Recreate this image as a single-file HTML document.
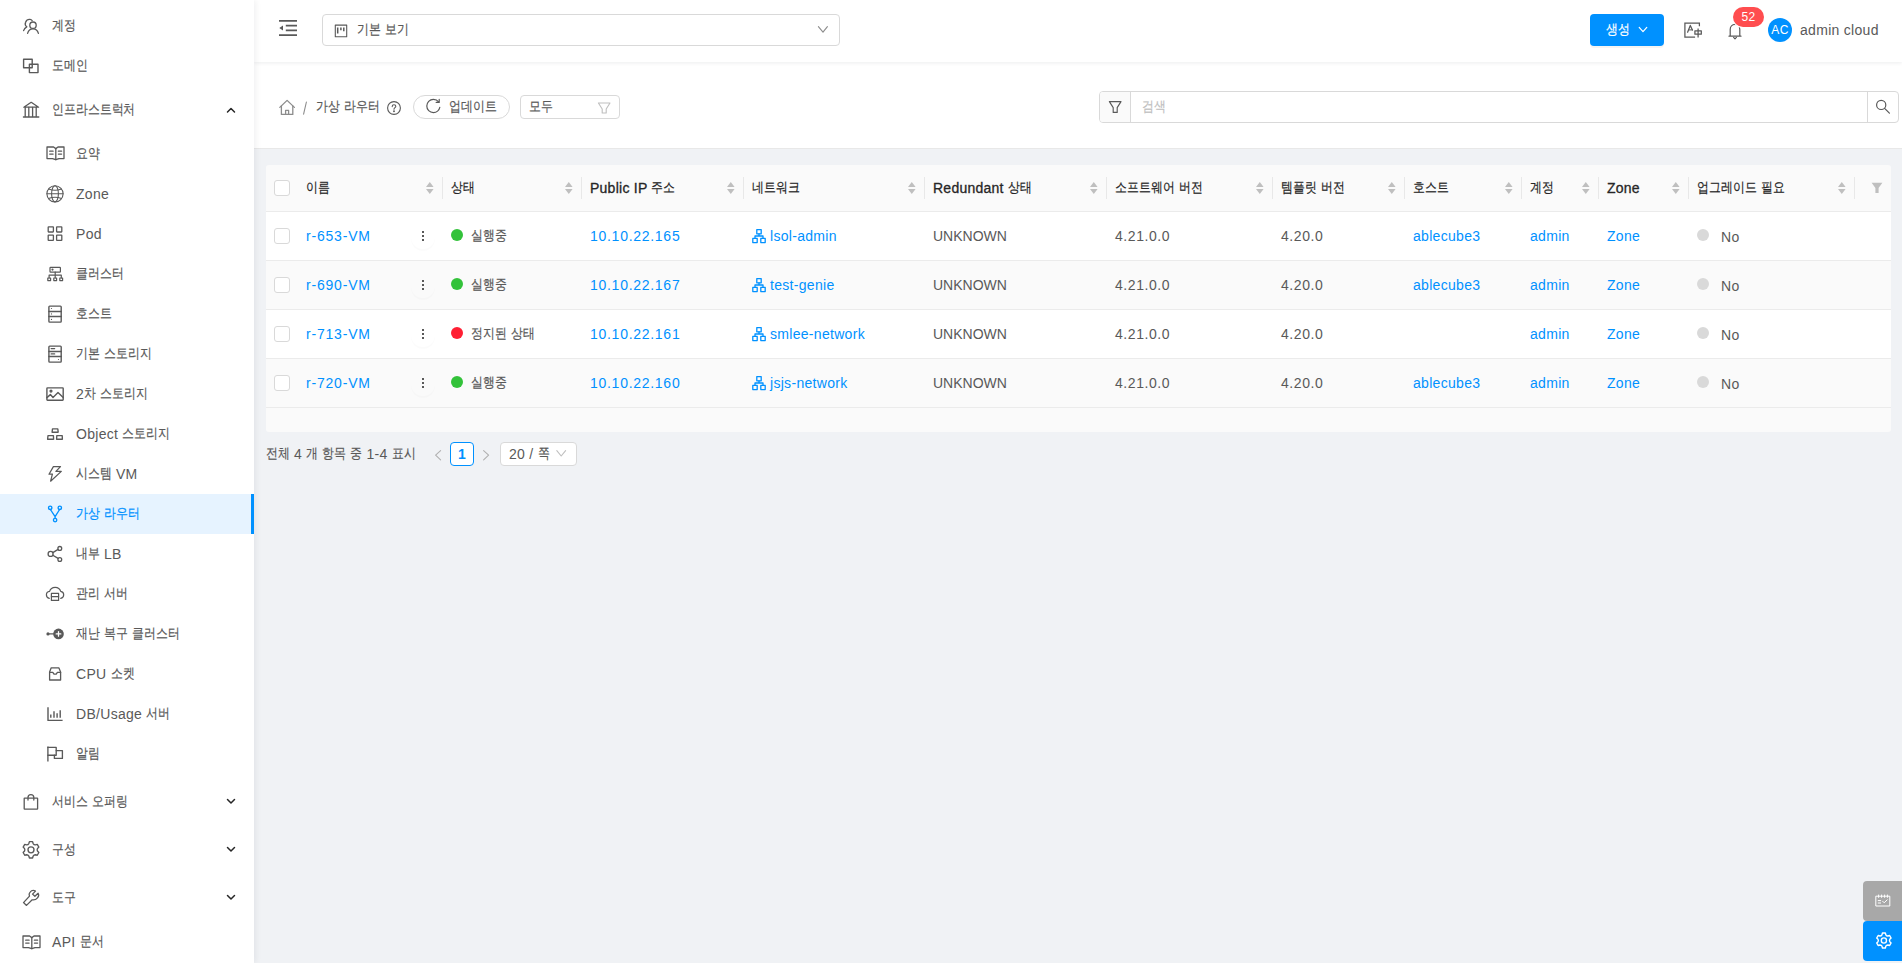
<!DOCTYPE html>
<html><head><meta charset="utf-8"><title>가상 라우터</title>
<style>
html,body{margin:0;padding:0;}
body{width:1902px;height:963px;overflow:hidden;position:relative;background:#f0f2f5;font-family:"Liberation Sans",sans-serif;font-size:14px;color:#595959;}
.t{position:absolute;white-space:nowrap;}
k{letter-spacing:0;display:inline-block;-webkit-text-stroke:0.2px currentColor;transform:translateY(-1px) scaleX(.85);transform-origin:0 50%;}
svg{overflow:visible;}
</style></head><body>
<div style="position:absolute;left:254px;top:62px;width:1648px;height:87px;box-sizing:border-box;background:#fff;border-bottom:1px solid #e8e8e8"></div>
<div style="position:absolute;left:266px;top:165px;width:1625px;height:267px;box-sizing:border-box;background:#fafafa;border-radius:3px"></div>
<div style="position:absolute;left:266px;top:212px;width:1625px;height:49px;box-sizing:border-box;background:#fff;border-bottom:1px solid #ebebeb"></div>
<div style="position:absolute;left:266px;top:261px;width:1625px;height:49px;box-sizing:border-box;background:#fafafa;border-bottom:1px solid #ebebeb"></div>
<div style="position:absolute;left:266px;top:310px;width:1625px;height:49px;box-sizing:border-box;background:#fff;border-bottom:1px solid #ebebeb"></div>
<div style="position:absolute;left:266px;top:359px;width:1625px;height:49px;box-sizing:border-box;background:#fafafa;border-bottom:1px solid #ebebeb"></div>
<div style="position:absolute;left:266px;top:211px;width:1625px;height:1px;box-sizing:border-box;background:#ebebeb"></div>
<div style="position:absolute;left:254px;top:0px;width:1648px;height:62px;box-sizing:border-box;background:#fff;box-shadow:0 1px 4px rgba(0,21,41,.08)"></div>
<div style="position:absolute;left:0px;top:0px;width:254px;height:963px;box-sizing:border-box;background:#fff;box-shadow:2px 0 6px rgba(0,21,41,.06)"></div>
<div style="position:absolute;left:0px;top:494px;width:254px;height:40px;box-sizing:border-box;background:#e6f3ff"></div>
<div style="position:absolute;left:251px;top:494px;width:3px;height:40px;box-sizing:border-box;background:#0091ff"></div>
<div class="t" style="left:52px;top:16.0px;font-size:14px;line-height:20px;color:#595959;font-weight:normal;letter-spacing:0.3px;"><k style="margin-right:-4.20px">계정</k></div>
<div class="t" style="left:52px;top:56.0px;font-size:14px;line-height:20px;color:#595959;font-weight:normal;letter-spacing:0.3px;"><k style="margin-right:-6.30px">도메인</k></div>
<div class="t" style="left:52px;top:100.0px;font-size:14px;line-height:20px;color:#595959;font-weight:normal;letter-spacing:0.3px;"><k style="margin-right:-14.70px">인프라스트럭처</k></div>
<div class="t" style="left:76px;top:144.0px;font-size:14px;line-height:20px;color:#595959;font-weight:normal;letter-spacing:0.3px;"><k style="margin-right:-4.20px">요약</k></div>
<div class="t" style="left:76px;top:184.0px;font-size:14px;line-height:20px;color:#595959;font-weight:normal;letter-spacing:0.3px;">Zone</div>
<div class="t" style="left:76px;top:224.0px;font-size:14px;line-height:20px;color:#595959;font-weight:normal;letter-spacing:0.3px;">Pod</div>
<div class="t" style="left:76px;top:264.0px;font-size:14px;line-height:20px;color:#595959;font-weight:normal;letter-spacing:0.3px;"><k style="margin-right:-8.40px">클러스터</k></div>
<div class="t" style="left:76px;top:304.0px;font-size:14px;line-height:20px;color:#595959;font-weight:normal;letter-spacing:0.3px;"><k style="margin-right:-6.30px">호스트</k></div>
<div class="t" style="left:76px;top:344.0px;font-size:14px;line-height:20px;color:#595959;font-weight:normal;letter-spacing:0.3px;"><k style="margin-right:-4.20px">기본</k> <k style="margin-right:-8.40px">스토리지</k></div>
<div class="t" style="left:76px;top:384.0px;font-size:14px;line-height:20px;color:#595959;font-weight:normal;letter-spacing:0.3px;">2<k style="margin-right:-2.10px">차</k> <k style="margin-right:-8.40px">스토리지</k></div>
<div class="t" style="left:76px;top:424.0px;font-size:14px;line-height:20px;color:#595959;font-weight:normal;letter-spacing:0.3px;">Object <k style="margin-right:-8.40px">스토리지</k></div>
<div class="t" style="left:76px;top:464.0px;font-size:14px;line-height:20px;color:#595959;font-weight:normal;letter-spacing:0.3px;"><k style="margin-right:-6.30px">시스템</k> VM</div>
<div class="t" style="left:76px;top:504.0px;font-size:14px;line-height:20px;color:#0091ff;font-weight:normal;letter-spacing:0.3px;"><k style="margin-right:-4.20px">가상</k> <k style="margin-right:-6.30px">라우터</k></div>
<div class="t" style="left:76px;top:544.0px;font-size:14px;line-height:20px;color:#595959;font-weight:normal;letter-spacing:0.3px;"><k style="margin-right:-4.20px">내부</k> LB</div>
<div class="t" style="left:76px;top:584.0px;font-size:14px;line-height:20px;color:#595959;font-weight:normal;letter-spacing:0.3px;"><k style="margin-right:-4.20px">관리</k> <k style="margin-right:-4.20px">서버</k></div>
<div class="t" style="left:76px;top:624.0px;font-size:14px;line-height:20px;color:#595959;font-weight:normal;letter-spacing:0.3px;"><k style="margin-right:-4.20px">재난</k> <k style="margin-right:-4.20px">복구</k> <k style="margin-right:-8.40px">클러스터</k></div>
<div class="t" style="left:76px;top:664.0px;font-size:14px;line-height:20px;color:#595959;font-weight:normal;letter-spacing:0.3px;">CPU <k style="margin-right:-4.20px">소켓</k></div>
<div class="t" style="left:76px;top:704.0px;font-size:14px;line-height:20px;color:#595959;font-weight:normal;letter-spacing:0.3px;">DB/Usage <k style="margin-right:-4.20px">서버</k></div>
<div class="t" style="left:76px;top:744.0px;font-size:14px;line-height:20px;color:#595959;font-weight:normal;letter-spacing:0.3px;"><k style="margin-right:-4.20px">알림</k></div>
<div class="t" style="left:52px;top:792.0px;font-size:14px;line-height:20px;color:#595959;font-weight:normal;letter-spacing:0.3px;"><k style="margin-right:-6.30px">서비스</k> <k style="margin-right:-6.30px">오퍼링</k></div>
<svg style="position:absolute;left:225px;top:796px;" width="12" height="10" viewBox="225 796 12 10" fill="none" stroke="#262626" stroke-width="1.5" stroke-linecap="round" stroke-linejoin="round"><path d="M227.5 799.5 L231 803 L234.5 799.5"/></svg>
<div class="t" style="left:52px;top:840.0px;font-size:14px;line-height:20px;color:#595959;font-weight:normal;letter-spacing:0.3px;"><k style="margin-right:-4.20px">구성</k></div>
<svg style="position:absolute;left:225px;top:844px;" width="12" height="10" viewBox="225 844 12 10" fill="none" stroke="#262626" stroke-width="1.5" stroke-linecap="round" stroke-linejoin="round"><path d="M227.5 847.5 L231 851 L234.5 847.5"/></svg>
<div class="t" style="left:52px;top:887.5px;font-size:14px;line-height:20px;color:#595959;font-weight:normal;letter-spacing:0.3px;"><k style="margin-right:-4.20px">도구</k></div>
<svg style="position:absolute;left:225px;top:891.5px;" width="12" height="10" viewBox="225 891.5 12 10" fill="none" stroke="#262626" stroke-width="1.5" stroke-linecap="round" stroke-linejoin="round"><path d="M227.5 895.0 L231 898.5 L234.5 895.0"/></svg>
<div class="t" style="left:52px;top:932.0px;font-size:14px;line-height:20px;color:#595959;font-weight:normal;letter-spacing:0.3px;">API <k style="margin-right:-4.20px">문서</k></div>
<svg style="position:absolute;left:225px;top:104px;" width="12" height="10" viewBox="225 104 12 10" fill="none" stroke="#262626" stroke-width="1.5" stroke-linecap="round" stroke-linejoin="round"><path d="M227.5 112 L231 108.5 L234.5 112"/></svg>
<svg style="position:absolute;left:20px;top:15px;" width="22" height="22" viewBox="20 15 22 22" fill="none" stroke="#595959" stroke-width="1.3" stroke-linecap="round" stroke-linejoin="round">
<circle cx="33" cy="25.2" r="3.2"/>
<path d="M27.6 33.4 C28.4 30.4 30.4 28.8 33 28.8 C35.6 28.8 37.6 30.4 38.4 33.4"/>
<path d="M23.6 30.6 C24.2 28.6 25.2 27.6 26.8 26.8 C25.2 25.6 25 23.6 25.6 22.2 C26.4 20.2 28 19.2 30 19.4 C31 19.5 31.7 20 32.2 20.6"/>
</svg>
<svg style="position:absolute;left:20px;top:55px;" width="22" height="22" viewBox="20 55 22 22" fill="none" stroke="#595959" stroke-width="1.4" stroke-linecap="round" stroke-linejoin="round">
<rect x="23.6" y="59.2" width="8.6" height="8.6"/>
<rect x="29.4" y="64.2" width="8.6" height="8.4"/>
</svg>
<svg style="position:absolute;left:20px;top:99px;" width="22" height="22" viewBox="20 99 22 22" fill="none" stroke="#595959" stroke-width="1.3" stroke-linecap="round" stroke-linejoin="round">
<path d="M23.8 107.2 L31.2 102.3 L38.6 107.2 Z"/>
<path d="M25.2 107.4 V116.6 M28.8 107.4 V116.6 M32.6 107.4 V116.6 M36.2 107.4 V116.6"/>
<path d="M23.4 117 H38.8"/>
</svg>
<svg style="position:absolute;left:43.6px;top:144.4px;" width="23" height="19" viewBox="43.6 144.4 23 19" fill="none" stroke="#595959" stroke-width="1.3" stroke-linecap="round" stroke-linejoin="round"><path d="M46.60 147.40 L46.60 159.00 L52.10 159.00 L55.40 160.10 L58.60 159.00 L63.60 159.00 L63.60 147.40 L57.60 147.40 L55.40 149.00 L53.20 147.40 Z"/>
<path d="M55.40 149.00 L55.40 160.10"/>
<path d="M49.30 151.60 L52.70 151.60 M49.30 154.50 L52.70 154.50 M58.00 151.60 L61.20 151.60 M58.00 154.50 L61.20 154.50"/></svg>
<svg style="position:absolute;left:19.6px;top:933.0px;" width="23" height="19" viewBox="19.6 933.0 23 19" fill="none" stroke="#595959" stroke-width="1.3" stroke-linecap="round" stroke-linejoin="round"><path d="M22.60 936.00 L22.60 947.60 L28.10 947.60 L31.40 948.70 L34.60 947.60 L39.60 947.60 L39.60 936.00 L33.60 936.00 L31.40 937.60 L29.20 936.00 Z"/>
<path d="M31.40 937.60 L31.40 948.70"/>
<path d="M25.30 940.20 L28.70 940.20 M25.30 943.10 L28.70 943.10 M34.00 940.20 L37.20 940.20 M34.00 943.10 L37.20 943.10"/></svg>
<svg style="position:absolute;left:44px;top:182px;" width="22" height="24" viewBox="44 182 22 24" fill="none" stroke="#595959" stroke-width="1.1" stroke-linecap="round" stroke-linejoin="round">
<circle cx="55" cy="193.8" r="8.1"/>
<ellipse cx="55" cy="193.8" rx="3.4" ry="8.1"/>
<path d="M46.9 193.8 H63.1"/>
<path d="M48.6 189 C52.5 190.6 57.5 190.6 61.4 189"/>
<path d="M48.6 198.6 C52.5 197 57.5 197 61.4 198.6"/>
</svg>
<svg style="position:absolute;left:44px;top:223px;" width="22" height="22" viewBox="44 223 22 22" fill="none" stroke="#595959" stroke-width="1.3" stroke-linecap="round" stroke-linejoin="round">
<rect x="48.2" y="226.8" width="5.2" height="5.2" rx="0.4"/>
<rect x="56.6" y="226.8" width="5.2" height="5.2" rx="0.4"/>
<rect x="48.2" y="235.2" width="5.2" height="5.2" rx="0.4"/>
<rect x="56.6" y="235.2" width="5.2" height="5.2" rx="0.4"/>
</svg>
<svg style="position:absolute;left:44px;top:263px;" width="22" height="22" viewBox="44 263 22 22" fill="none" stroke="#595959" stroke-width="1.2" stroke-linecap="round" stroke-linejoin="round">
<rect x="50" y="267.4" width="10.4" height="4.8" rx="0.6"/>
<circle cx="52.5" cy="269.6" r="0.5" fill="#595959"/>
<path d="M55.2 272.2 V275.2 M49.1 278 V275.2 H61.3 V278 M55.2 275.2 V278"/>
<rect x="47.8" y="278" width="2.8" height="2.6"/>
<rect x="53.8" y="278" width="2.8" height="2.6"/>
<rect x="59.8" y="278" width="2.8" height="2.6"/>
</svg>
<svg style="position:absolute;left:44px;top:302px;" width="22" height="24" viewBox="44 302 22 24" fill="none" stroke="#595959" stroke-width="1.4" stroke-linecap="round" stroke-linejoin="round">
<rect x="48.9" y="306.1" width="12.3" height="16" rx="0.8"/>
<path d="M48.9 311.5 H61.2 M48.9 316.5 H61.2"/>
<circle cx="51.5" cy="308.5" r="0.6" fill="#595959" stroke="none"/>
<circle cx="51.5" cy="313.9" r="0.6" fill="#595959" stroke="none"/>
<circle cx="51.5" cy="319.4" r="0.6" fill="#595959" stroke="none"/>
</svg>
<svg style="position:absolute;left:44px;top:342px;" width="22" height="24" viewBox="44 342 22 24" fill="none" stroke="#595959" stroke-width="1.4" stroke-linecap="round" stroke-linejoin="round">
<rect x="48.9" y="346.1" width="12.3" height="16" rx="0.8"/>
<path d="M48.9 351.5 H61.2 M48.9 356.5 H61.2"/>
<path d="M51.2 348.6 H54.6 M51.2 353.9 H54.6"/>
<circle cx="58.5" cy="359.5" r="0.6" fill="#595959" stroke="none"/>
</svg>
<svg style="position:absolute;left:44px;top:384px;" width="22" height="20" viewBox="44 384 22 20" fill="none" stroke="#595959" stroke-width="1.4" stroke-linecap="round" stroke-linejoin="round">
<rect x="46.9" y="387.9" width="16.3" height="12.3" rx="0.6"/>
<path d="M46.9 397.6 L50.4 394.6 L53 397.4 L58 392.6 L63.2 397.4"/>
<circle cx="51" cy="391.1" r="0.9"/>
</svg>
<svg style="position:absolute;left:44px;top:424px;" width="22" height="20" viewBox="44 424 22 20" fill="none" stroke="#595959" stroke-width="1.35" stroke-linecap="round" stroke-linejoin="round">
<path d="M52.5 428.8 H57.8 L58.2 432.2 H52.1 Z"/>
<path d="M48 435.6 H53.4 L53.6 439.2 H47.6 Z"/>
<path d="M56.8 435.6 H62.2 L62.4 439.2 H56.6 Z"/>
</svg>
<svg style="position:absolute;left:44px;top:463px;" width="22" height="22" viewBox="44 463 22 22" fill="none" stroke="#595959" stroke-width="1.25" stroke-linecap="round" stroke-linejoin="round">
<path d="M53.4 466.6 H60.5 L55.9 471.4 H61.3 L50.6 481.2 L52.4 474.2 H49 Z"/>
</svg>
<svg style="position:absolute;left:44px;top:503px;" width="22" height="22" viewBox="44 503 22 22" fill="none" stroke="#0091ff" stroke-width="1.35" stroke-linecap="round" stroke-linejoin="round">
<circle cx="50.2" cy="507.8" r="1.7"/>
<circle cx="59.8" cy="507.8" r="1.7"/>
<circle cx="55.1" cy="520.1" r="1.7"/>
<path d="M50.4 509.5 L55.1 516.6 L59.6 509.5 M55.1 516.6 V518.4"/>
</svg>
<svg style="position:absolute;left:44px;top:543px;" width="22" height="22" viewBox="44 543 22 22" fill="none" stroke="#595959" stroke-width="1.3" stroke-linecap="round" stroke-linejoin="round">
<circle cx="50.6" cy="553.9" r="2.5"/>
<circle cx="59.8" cy="548.4" r="1.9"/>
<circle cx="59.8" cy="559.5" r="1.9"/>
<path d="M52.8 552.6 L58.1 549.4 M52.8 555.2 L58.1 558.4"/>
</svg>
<svg style="position:absolute;left:44px;top:583px;" width="24" height="22" viewBox="44 583 24 22" fill="none" stroke="#595959" stroke-width="1.2" stroke-linecap="round" stroke-linejoin="round">
<path d="M49.3 598.4 C47.6 598 46.4 596.6 46.4 594.8 C46.4 592.9 47.8 591.6 49.6 591.4 C50.3 588.9 52.6 587.3 55.2 587.3 C57.8 587.3 60 589 60.7 591.4 C62.5 591.7 63.7 593 63.7 594.8 C63.7 596.6 62.5 598 60.7 598.4"/>
<rect x="51.4" y="593.4" width="7.2" height="7"/>
<path d="M51.4 596.6 H58.6"/>
</svg>
<svg style="position:absolute;left:44px;top:623px;" width="22" height="22" viewBox="44 623 22 22" fill="none" stroke="#595959" stroke-width="1.3" stroke-linecap="round" stroke-linejoin="round">
<circle cx="48" cy="633.9" r="1.6" fill="#595959" stroke="none"/>
<path d="M48 633.9 H54" stroke-width="1.2"/>
<circle cx="58.5" cy="633.9" r="5.3" fill="#595959" stroke="none"/>
<path d="M58.5 631.6 V636.2 M56.2 633.9 H60.8" stroke="#fff" stroke-width="1.3"/>
</svg>
<svg style="position:absolute;left:44px;top:663px;" width="22" height="22" viewBox="44 663 22 22" fill="none" stroke="#595959" stroke-width="1.3" stroke-linecap="round" stroke-linejoin="round">
<path d="M49.6 671.9 L51.2 667.8 H58.8 L60.6 671.9 V680 H49.6 Z"/>
<path d="M49.6 672.4 H52.8 L54 674.2 H56.2 L57.4 672.4 H60.6"/>
</svg>
<svg style="position:absolute;left:44px;top:703px;" width="22" height="22" viewBox="44 703 22 22" fill="none" stroke="#595959" stroke-width="1.4" stroke-linecap="round" stroke-linejoin="round">
<path d="M48 707.2 V720.4 H62.6" stroke-linecap="butt"/>
<path d="M50.8 714.6 V717.8 M54 711.2 V717.8 M57.1 713.2 V717.8 M60.2 710.2 V717.8" stroke-linecap="butt"/>
</svg>
<svg style="position:absolute;left:44px;top:743px;" width="22" height="22" viewBox="44 743 22 22" fill="none" stroke="#595959" stroke-width="1.35" stroke-linecap="round" stroke-linejoin="round">
<path d="M47.9 746.6 V761.4" stroke-linecap="butt"/>
<path d="M47.9 747.4 H56.2 V755.2 H47.9"/>
<path d="M56.2 750.6 H62.4 V758.4 H54.4 V755.2"/>
</svg>
<svg style="position:absolute;left:20px;top:790px;" width="22" height="24" viewBox="20 790 22 24" fill="none" stroke="#595959" stroke-width="1.3" stroke-linecap="round" stroke-linejoin="round">
<rect x="24.2" y="798.2" width="13.4" height="11" rx="0.4"/>
<path d="M28 800 V797.6 C28 795.6 29.4 794.6 30.9 794.6 C32.4 794.6 33.8 795.6 33.8 797.6 V800"/>
</svg>
<svg style="position:absolute;left:20px;top:838px;" width="24" height="24" viewBox="20 838 24 24" fill="none" stroke="#595959" stroke-width="1.35" stroke-linecap="round" stroke-linejoin="round">
<path d="M28.85 843.56 L29.42 841.65 L32.58 841.65 L33.15 843.56 Q33.90 844.78 35.33 844.82 L35.33 844.82 L37.26 844.35 L38.85 847.10 L37.48 848.54 Q36.80 849.80 37.48 851.06 L37.48 851.06 L38.85 852.50 L37.26 855.25 L35.33 854.78 Q33.90 854.82 33.15 856.04 L33.15 856.04 L32.58 857.95 L29.42 857.95 L28.85 856.04 Q28.10 854.82 26.67 854.78 L26.67 854.78 L24.74 855.25 L23.15 852.50 L24.52 851.06 Q25.20 849.80 24.52 848.54 L24.52 848.54 L23.15 847.10 L24.74 844.35 L26.67 844.82 Q28.10 844.78 28.85 843.56 Z"/>
<circle cx="31" cy="849.8" r="3"/>
</svg>
<svg style="position:absolute;left:20px;top:886px;" width="24" height="24" viewBox="20 886 24 24" fill="none" stroke="#595959" stroke-width="1.3" stroke-linecap="round" stroke-linejoin="round">
<path d="M23.5 902.6 L26.5 905.4 L32.2 899.8 C33.6 900.1 36 899.6 37.5 897.8 C38.8 896.3 38.9 894.6 38.1 893.3 L34.9 896.2 L32.5 894.1 L35.5 891.1 C33.7 890.1 31.3 890.7 30.1 892.1 C29 893.3 28.9 894.9 29.5 896.1 Z"/>
</svg>
<svg style="position:absolute;left:276px;top:17px;" width="24" height="22" viewBox="276 17 24 22" fill="none" stroke="#595959" stroke-width="1.3" stroke-linecap="round" stroke-linejoin="round">
<path d="M279 20.8 H297 M285.8 25.6 H297 M285.8 30.3 H297 M279 35.1 H297" stroke-width="1.7" stroke-linecap="butt"/>
<path d="M279.3 28 L283 25.4 V30.6 Z" fill="#595959" stroke="none"/>
</svg>
<div style="position:absolute;left:322px;top:14px;width:518px;height:32px;box-sizing:border-box;border:1px solid #d9d9d9;border-radius:4px;background:#fff"></div>
<svg style="position:absolute;left:332px;top:22px;" width="18" height="18" viewBox="332 22 18 18" fill="none" stroke="#595959" stroke-width="1.1" stroke-linecap="round" stroke-linejoin="round">
<rect x="335.3" y="25.1" width="11.4" height="11.6"/>
<path d="M337.7 27.6 V33.6 M340.9 27.6 V30.2 M343.8 27.6 V31.2" stroke-width="1.5" stroke-linecap="butt"/>
</svg>
<div class="t" style="left:357px;top:20.0px;font-size:14px;line-height:20px;color:#595959;font-weight:normal;letter-spacing:0.3px;"><k style="margin-right:-4.20px">기본</k> <k style="margin-right:-4.20px">보기</k></div>
<svg style="position:absolute;left:814px;top:23px;" width="16" height="12" viewBox="814 23 16 12" fill="none" stroke="#8c8c8c" stroke-width="1.1" stroke-linecap="round" stroke-linejoin="round"><path d="M818.4 26.6 L823 32.2 L827.4 26.6"/></svg>
<div style="position:absolute;left:1590px;top:14px;width:74px;height:32px;box-sizing:border-box;background:#0091ff;border-radius:4px;box-shadow:0 2px 0 rgba(0,0,0,.045)"></div>
<div class="t" style="left:1606px;top:20.0px;font-size:14px;line-height:20px;color:#fff;font-weight:normal;letter-spacing:0.3px;"><k style="margin-right:-4.20px">생성</k></div>
<svg style="position:absolute;left:1636px;top:24px;" width="14" height="12" viewBox="1636 24 14 12" fill="none" stroke="#fff" stroke-width="1.2" stroke-linecap="round" stroke-linejoin="round"><path d="M1639.2 27.4 L1643 31.6 L1646.8 27.4"/></svg>
<svg style="position:absolute;left:1681px;top:19px;" width="24" height="22" viewBox="1681 19 24 22" fill="none" stroke="#595959" stroke-width="1.25" stroke-linecap="round" stroke-linejoin="round">
<path d="M1699.4 26.2 V23 H1684.9 V37.2 H1695.1" stroke-linecap="butt" stroke-linejoin="miter"/>
<path d="M1687.6 32.2 L1690.3 25.4 L1692.4 30"/>
<path d="M1689.2 29.9 H1692.6" stroke-width="1"/>
<rect x="1694.9" y="30.8" width="6.4" height="3.4"/>
<path d="M1698.1 28.6 V37.6" stroke-linecap="butt"/>
</svg>
<svg style="position:absolute;left:1725px;top:20px;" width="20" height="22" viewBox="1725 20 20 22" fill="none" stroke="#595959" stroke-width="1.2" stroke-linecap="round" stroke-linejoin="round">
<path d="M1729 36.2 H1741 M1730.2 36.2 V29.6 C1730.2 26.6 1732.2 24.4 1735 24.4 C1737.8 24.4 1739.8 26.6 1739.8 29.6 V36.2"/>
<path d="M1733.6 37.4 L1735 38.8 L1736.4 37.4"/>
</svg>
<div style="position:absolute;left:1733px;top:7px;width:31px;height:20px;box-sizing:border-box;background:#ff4d4f;border-radius:10px;box-shadow:0 0 0 1px #fff"></div>
<div class="t" style="left:1733px;top:7.0px;font-size:12px;line-height:20px;color:#fff;font-weight:normal;letter-spacing:0.3px;width:31px;text-align:center;">52</div>
<div style="position:absolute;left:1768px;top:18px;width:24px;height:24px;box-sizing:border-box;background:#0091ff;border-radius:50%"></div>
<div class="t" style="left:1768px;top:20.0px;font-size:12px;line-height:20px;color:#fff;font-weight:normal;letter-spacing:0.3px;width:24px;text-align:center;">AC</div>
<div class="t" style="left:1800px;top:20.0px;font-size:14px;line-height:20px;color:#595959;font-weight:normal;letter-spacing:0.3px;">admin cloud</div>
<svg style="position:absolute;left:276px;top:97px;" width="22" height="21" viewBox="276 97 22 21" fill="none" stroke="#8c8c8c" stroke-width="1.3" stroke-linecap="round" stroke-linejoin="round">
<path d="M279.8 107.4 L287.1 100.4 L294.4 107.4"/>
<path d="M281.4 106 V114.4 H292.8 V106"/>
<path d="M285.6 114.4 V110.4 H288.6 V114.4"/>
</svg>
<svg style="position:absolute;left:300px;top:99px;" width="10" height="18" viewBox="300 99 10 18" fill="none" stroke="#8c8c8c" stroke-width="1.1" stroke-linecap="round" stroke-linejoin="round"><path d="M306.4 102 L303.6 114.2"/></svg>
<div class="t" style="left:315.5px;top:97.0px;font-size:14px;line-height:20px;color:#595959;font-weight:normal;letter-spacing:0.3px;"><k style="margin-right:-4.20px">가상</k> <k style="margin-right:-6.30px">라우터</k></div>
<svg style="position:absolute;left:385px;top:99px;" width="18" height="18" viewBox="385 99 18 18" fill="none" stroke="#595959" stroke-width="1.1" stroke-linecap="round" stroke-linejoin="round">
<circle cx="394" cy="108" r="6.4"/>
<path d="M392.2 106.6 C392.2 105.4 393 104.7 394 104.7 C395 104.7 395.8 105.4 395.8 106.3 C395.8 107.6 394 107.7 394 109.2"/>
<circle cx="394" cy="111.2" r="0.4" fill="#595959"/>
</svg>
<div style="position:absolute;left:413px;top:95px;width:97px;height:24px;box-sizing:border-box;border:1px solid #d9d9d9;border-radius:12px;background:#fff"></div>
<svg style="position:absolute;left:423px;top:96px;" width="20" height="20" viewBox="423 96 20 20" fill="none" stroke="#595959" stroke-width="1.2" stroke-linecap="round" stroke-linejoin="round">
<path d="M438.6 101.8 C437.4 100.2 435.6 99.4 433.4 99.4 C429.6 99.4 426.8 102.4 426.8 106 C426.8 109.6 429.6 112.6 433.4 112.6 C436.6 112.6 439.2 110.2 439.8 107.4"/>
<path d="M439.2 99.4 V102.4 H436.2"/>
</svg>
<div class="t" style="left:449px;top:97.0px;font-size:14px;line-height:20px;color:#595959;font-weight:normal;letter-spacing:0.3px;"><k style="margin-right:-8.40px">업데이트</k></div>
<div style="position:absolute;left:520px;top:95px;width:100px;height:24px;box-sizing:border-box;border:1px solid #d9d9d9;border-radius:4px;background:#fff"></div>
<div class="t" style="left:528.5px;top:97.0px;font-size:14px;line-height:20px;color:#595959;font-weight:normal;letter-spacing:0.3px;"><k style="margin-right:-4.20px">모두</k></div>
<svg style="position:absolute;left:595px;top:100px;" width="18" height="16" viewBox="595 100 18 16" fill="none" stroke="#bfbfbf" stroke-width="1.1" stroke-linecap="round" stroke-linejoin="round">
<path d="M598.4 103 H610 L606.2 109 V113 H602.2 V109 Z"/>
</svg>
<div style="position:absolute;left:1099px;top:91px;width:800px;height:32px;box-sizing:border-box;border:1px solid #d9d9d9;border-radius:4px;background:#fff"></div>
<div style="position:absolute;left:1100px;top:92px;width:31px;height:30px;box-sizing:border-box;background:#fafafa;border-radius:3px 0 0 3px"></div>
<div style="position:absolute;left:1130px;top:92px;width:1px;height:30px;box-sizing:border-box;background:#d9d9d9"></div>
<div style="position:absolute;left:1867px;top:92px;width:1px;height:30px;box-sizing:border-box;background:#d9d9d9"></div>
<svg style="position:absolute;left:1106px;top:98px;" width="18" height="18" viewBox="1106 98 18 18" fill="none" stroke="#595959" stroke-width="1.15" stroke-linecap="round" stroke-linejoin="round">
<path d="M1109.4 101.6 H1121 L1117.2 107.6 V112.4 H1113.2 V107.6 Z"/>
</svg>
<div class="t" style="left:1142px;top:97.0px;font-size:14px;line-height:20px;color:#bfbfbf;font-weight:normal;letter-spacing:0.3px;"><k style="margin-right:-4.20px">검색</k></div>
<svg style="position:absolute;left:1873px;top:97px;" width="20" height="20" viewBox="1873 97 20 20" fill="none" stroke="#595959" stroke-width="1.2" stroke-linecap="round" stroke-linejoin="round">
<circle cx="1881.2" cy="104.9" r="4.6"/>
<path d="M1884.6 108.3 L1889.4 113.1"/>
</svg>
<div style="position:absolute;left:274px;top:180px;width:16px;height:16px;box-sizing:border-box;border:1px solid #d9d9d9;border-radius:3px;background:#fff"></div>
<div class="t" style="left:306px;top:178.0px;font-size:14px;line-height:20px;color:#262626;font-weight:normal;letter-spacing:0.25px;-webkit-text-stroke:0.3px #262626;"><k style="margin-right:-4.20px">이름</k></div>
<div style="position:absolute;left:442px;top:177px;width:1px;height:22px;box-sizing:border-box;background:#e8e8e8"></div>
<svg style="position:absolute;left:424.5px;top:180px;" width="10" height="16" viewBox="424.5 180 10 16" fill="none" stroke="#595959" stroke-width="1.3" stroke-linecap="round" stroke-linejoin="round"><path d="M425.5 186.9 L429.3 182 L433.1 186.9 Z M425.5 189 L429.3 193.9 L433.1 189 Z" fill="#bfbfbf" stroke="none"/></svg>
<div class="t" style="left:451px;top:178.0px;font-size:14px;line-height:20px;color:#262626;font-weight:normal;letter-spacing:0.25px;-webkit-text-stroke:0.3px #262626;"><k style="margin-right:-4.20px">상태</k></div>
<div style="position:absolute;left:581px;top:177px;width:1px;height:22px;box-sizing:border-box;background:#e8e8e8"></div>
<svg style="position:absolute;left:563.5px;top:180px;" width="10" height="16" viewBox="563.5 180 10 16" fill="none" stroke="#595959" stroke-width="1.3" stroke-linecap="round" stroke-linejoin="round"><path d="M564.5 186.9 L568.3 182 L572.1 186.9 Z M564.5 189 L568.3 193.9 L572.1 189 Z" fill="#bfbfbf" stroke="none"/></svg>
<div class="t" style="left:590px;top:178.0px;font-size:14px;line-height:20px;color:#262626;font-weight:normal;letter-spacing:0.25px;-webkit-text-stroke:0.3px #262626;">Public IP <k style="margin-right:-4.20px">주소</k></div>
<div style="position:absolute;left:743px;top:177px;width:1px;height:22px;box-sizing:border-box;background:#e8e8e8"></div>
<svg style="position:absolute;left:725.5px;top:180px;" width="10" height="16" viewBox="725.5 180 10 16" fill="none" stroke="#595959" stroke-width="1.3" stroke-linecap="round" stroke-linejoin="round"><path d="M726.5 186.9 L730.3 182 L734.1 186.9 Z M726.5 189 L730.3 193.9 L734.1 189 Z" fill="#bfbfbf" stroke="none"/></svg>
<div class="t" style="left:752px;top:178.0px;font-size:14px;line-height:20px;color:#262626;font-weight:normal;letter-spacing:0.25px;-webkit-text-stroke:0.3px #262626;"><k style="margin-right:-8.40px">네트워크</k></div>
<div style="position:absolute;left:924px;top:177px;width:1px;height:22px;box-sizing:border-box;background:#e8e8e8"></div>
<svg style="position:absolute;left:906.5px;top:180px;" width="10" height="16" viewBox="906.5 180 10 16" fill="none" stroke="#595959" stroke-width="1.3" stroke-linecap="round" stroke-linejoin="round"><path d="M907.5 186.9 L911.3 182 L915.1 186.9 Z M907.5 189 L911.3 193.9 L915.1 189 Z" fill="#bfbfbf" stroke="none"/></svg>
<div class="t" style="left:933px;top:178.0px;font-size:14px;line-height:20px;color:#262626;font-weight:normal;letter-spacing:0.25px;-webkit-text-stroke:0.3px #262626;">Redundant <k style="margin-right:-4.20px">상태</k></div>
<div style="position:absolute;left:1106px;top:177px;width:1px;height:22px;box-sizing:border-box;background:#e8e8e8"></div>
<svg style="position:absolute;left:1088.5px;top:180px;" width="10" height="16" viewBox="1088.5 180 10 16" fill="none" stroke="#595959" stroke-width="1.3" stroke-linecap="round" stroke-linejoin="round"><path d="M1089.5 186.9 L1093.3 182 L1097.1 186.9 Z M1089.5 189 L1093.3 193.9 L1097.1 189 Z" fill="#bfbfbf" stroke="none"/></svg>
<div class="t" style="left:1115px;top:178.0px;font-size:14px;line-height:20px;color:#262626;font-weight:normal;letter-spacing:0.25px;-webkit-text-stroke:0.3px #262626;"><k style="margin-right:-10.50px">소프트웨어</k> <k style="margin-right:-4.20px">버전</k></div>
<div style="position:absolute;left:1272px;top:177px;width:1px;height:22px;box-sizing:border-box;background:#e8e8e8"></div>
<svg style="position:absolute;left:1254.5px;top:180px;" width="10" height="16" viewBox="1254.5 180 10 16" fill="none" stroke="#595959" stroke-width="1.3" stroke-linecap="round" stroke-linejoin="round"><path d="M1255.5 186.9 L1259.3 182 L1263.1 186.9 Z M1255.5 189 L1259.3 193.9 L1263.1 189 Z" fill="#bfbfbf" stroke="none"/></svg>
<div class="t" style="left:1281px;top:178.0px;font-size:14px;line-height:20px;color:#262626;font-weight:normal;letter-spacing:0.25px;-webkit-text-stroke:0.3px #262626;"><k style="margin-right:-6.30px">템플릿</k> <k style="margin-right:-4.20px">버전</k></div>
<div style="position:absolute;left:1404px;top:177px;width:1px;height:22px;box-sizing:border-box;background:#e8e8e8"></div>
<svg style="position:absolute;left:1386.5px;top:180px;" width="10" height="16" viewBox="1386.5 180 10 16" fill="none" stroke="#595959" stroke-width="1.3" stroke-linecap="round" stroke-linejoin="round"><path d="M1387.5 186.9 L1391.3 182 L1395.1 186.9 Z M1387.5 189 L1391.3 193.9 L1395.1 189 Z" fill="#bfbfbf" stroke="none"/></svg>
<div class="t" style="left:1413px;top:178.0px;font-size:14px;line-height:20px;color:#262626;font-weight:normal;letter-spacing:0.25px;-webkit-text-stroke:0.3px #262626;"><k style="margin-right:-6.30px">호스트</k></div>
<div style="position:absolute;left:1521px;top:177px;width:1px;height:22px;box-sizing:border-box;background:#e8e8e8"></div>
<svg style="position:absolute;left:1503.5px;top:180px;" width="10" height="16" viewBox="1503.5 180 10 16" fill="none" stroke="#595959" stroke-width="1.3" stroke-linecap="round" stroke-linejoin="round"><path d="M1504.5 186.9 L1508.3 182 L1512.1 186.9 Z M1504.5 189 L1508.3 193.9 L1512.1 189 Z" fill="#bfbfbf" stroke="none"/></svg>
<div class="t" style="left:1530px;top:178.0px;font-size:14px;line-height:20px;color:#262626;font-weight:normal;letter-spacing:0.25px;-webkit-text-stroke:0.3px #262626;"><k style="margin-right:-4.20px">계정</k></div>
<div style="position:absolute;left:1598px;top:177px;width:1px;height:22px;box-sizing:border-box;background:#e8e8e8"></div>
<svg style="position:absolute;left:1580.5px;top:180px;" width="10" height="16" viewBox="1580.5 180 10 16" fill="none" stroke="#595959" stroke-width="1.3" stroke-linecap="round" stroke-linejoin="round"><path d="M1581.5 186.9 L1585.3 182 L1589.1 186.9 Z M1581.5 189 L1585.3 193.9 L1589.1 189 Z" fill="#bfbfbf" stroke="none"/></svg>
<div class="t" style="left:1607px;top:178.0px;font-size:14px;line-height:20px;color:#262626;font-weight:normal;letter-spacing:0.25px;-webkit-text-stroke:0.3px #262626;">Zone</div>
<div style="position:absolute;left:1688px;top:177px;width:1px;height:22px;box-sizing:border-box;background:#e8e8e8"></div>
<svg style="position:absolute;left:1670.5px;top:180px;" width="10" height="16" viewBox="1670.5 180 10 16" fill="none" stroke="#595959" stroke-width="1.3" stroke-linecap="round" stroke-linejoin="round"><path d="M1671.5 186.9 L1675.3 182 L1679.1 186.9 Z M1671.5 189 L1675.3 193.9 L1679.1 189 Z" fill="#bfbfbf" stroke="none"/></svg>
<div class="t" style="left:1697px;top:178.0px;font-size:14px;line-height:20px;color:#262626;font-weight:normal;letter-spacing:0.25px;-webkit-text-stroke:0.3px #262626;"><k style="margin-right:-10.50px">업그레이드</k> <k style="margin-right:-4.20px">필요</k></div>
<div style="position:absolute;left:1854px;top:177px;width:1px;height:22px;box-sizing:border-box;background:#e8e8e8"></div>
<svg style="position:absolute;left:1836.5px;top:180px;" width="10" height="16" viewBox="1836.5 180 10 16" fill="none" stroke="#595959" stroke-width="1.3" stroke-linecap="round" stroke-linejoin="round"><path d="M1837.5 186.9 L1841.3 182 L1845.1 186.9 Z M1837.5 189 L1841.3 193.9 L1845.1 189 Z" fill="#bfbfbf" stroke="none"/></svg>
<svg style="position:absolute;left:1869px;top:180px;" width="16" height="16" viewBox="1869 180 16 16" fill="none" stroke="#595959" stroke-width="1.3" stroke-linecap="round" stroke-linejoin="round"><path d="M1871.6 182.8 H1882.4 L1878.6 188 V193 H1875.4 V188 Z" fill="#bfbfbf" stroke="none"/></svg>
<div style="position:absolute;left:274px;top:228px;width:16px;height:16px;box-sizing:border-box;border:1px solid #d9d9d9;border-radius:3px;background:#fff"></div>
<div class="t" style="left:306px;top:226.0px;font-size:14px;line-height:20px;color:#0091ff;font-weight:normal;letter-spacing:0.8px;">r-653-VM</div>
<div style="position:absolute;left:411px;top:225px;width:24px;height:24px;box-sizing:border-box;border-radius:50%;box-shadow:0 2px 0 rgba(0,0,0,.015)"></div>
<div style="position:absolute;left:422px;top:231px;width:2px;height:2px;box-sizing:border-box;background:#595959"></div>
<div style="position:absolute;left:422px;top:235px;width:2px;height:2px;box-sizing:border-box;background:#595959"></div>
<div style="position:absolute;left:422px;top:239px;width:2px;height:2px;box-sizing:border-box;background:#595959"></div>
<div style="position:absolute;left:451px;top:229px;width:12px;height:12px;box-sizing:border-box;background:#33c23a;border-radius:50%"></div>
<div class="t" style="left:471px;top:226.0px;font-size:14px;line-height:20px;color:#595959;font-weight:normal;letter-spacing:0.3px;"><k style="margin-right:-6.30px">실행중</k></div>
<div class="t" style="left:590px;top:226.0px;font-size:14px;line-height:20px;color:#0091ff;font-weight:normal;letter-spacing:0.72px;">10.10.22.165</div>
<svg style="position:absolute;left:750px;top:227px;" width="18" height="18" viewBox="750 227 18 18" fill="none" stroke="#0091ff" stroke-width="1.3" stroke-linecap="round" stroke-linejoin="round">
<rect x="756.8" y="229.6" width="4.4" height="4.2"/>
<rect x="752.8" y="238.4" width="4.4" height="4.2"/>
<rect x="760.8" y="238.4" width="4.4" height="4.2"/>
<path d="M759 233.8 V236 M755 238.4 V236 H763 V238.4"/>
</svg>
<div class="t" style="left:770px;top:226.0px;font-size:14px;line-height:20px;color:#0091ff;font-weight:normal;letter-spacing:0.3px;">lsol-admin</div>
<div class="t" style="left:933px;top:226.0px;font-size:14px;line-height:20px;color:#595959;font-weight:normal;letter-spacing:0px;">UNKNOWN</div>
<div class="t" style="left:1115px;top:226.0px;font-size:14px;line-height:20px;color:#595959;font-weight:normal;letter-spacing:0.56px;">4.21.0.0</div>
<div class="t" style="left:1281px;top:226.0px;font-size:14px;line-height:20px;color:#595959;font-weight:normal;letter-spacing:0.56px;">4.20.0</div>
<div class="t" style="left:1413px;top:226.0px;font-size:14px;line-height:20px;color:#0091ff;font-weight:normal;letter-spacing:0.3px;">ablecube3</div>
<div class="t" style="left:1530px;top:226.0px;font-size:14px;line-height:20px;color:#0091ff;font-weight:normal;letter-spacing:0.3px;">admin</div>
<div class="t" style="left:1607px;top:226.0px;font-size:14px;line-height:20px;color:#0091ff;font-weight:normal;letter-spacing:0.3px;">Zone</div>
<div style="position:absolute;left:1697px;top:229px;width:12px;height:12px;box-sizing:border-box;background:#d9d9d9;border-radius:50%"></div>
<div class="t" style="left:1721px;top:226.8px;font-size:14px;line-height:20px;color:#595959;font-weight:normal;letter-spacing:0.3px;">No</div>
<div style="position:absolute;left:274px;top:277px;width:16px;height:16px;box-sizing:border-box;border:1px solid #d9d9d9;border-radius:3px;background:#fff"></div>
<div class="t" style="left:306px;top:275.0px;font-size:14px;line-height:20px;color:#0091ff;font-weight:normal;letter-spacing:0.8px;">r-690-VM</div>
<div style="position:absolute;left:411px;top:274px;width:24px;height:24px;box-sizing:border-box;border-radius:50%;box-shadow:0 2px 0 rgba(0,0,0,.015)"></div>
<div style="position:absolute;left:422px;top:280px;width:2px;height:2px;box-sizing:border-box;background:#595959"></div>
<div style="position:absolute;left:422px;top:284px;width:2px;height:2px;box-sizing:border-box;background:#595959"></div>
<div style="position:absolute;left:422px;top:288px;width:2px;height:2px;box-sizing:border-box;background:#595959"></div>
<div style="position:absolute;left:451px;top:278px;width:12px;height:12px;box-sizing:border-box;background:#33c23a;border-radius:50%"></div>
<div class="t" style="left:471px;top:275.0px;font-size:14px;line-height:20px;color:#595959;font-weight:normal;letter-spacing:0.3px;"><k style="margin-right:-6.30px">실행중</k></div>
<div class="t" style="left:590px;top:275.0px;font-size:14px;line-height:20px;color:#0091ff;font-weight:normal;letter-spacing:0.72px;">10.10.22.167</div>
<svg style="position:absolute;left:750px;top:276px;" width="18" height="18" viewBox="750 276 18 18" fill="none" stroke="#0091ff" stroke-width="1.3" stroke-linecap="round" stroke-linejoin="round">
<rect x="756.8" y="278.6" width="4.4" height="4.2"/>
<rect x="752.8" y="287.4" width="4.4" height="4.2"/>
<rect x="760.8" y="287.4" width="4.4" height="4.2"/>
<path d="M759 282.8 V285 M755 287.4 V285 H763 V287.4"/>
</svg>
<div class="t" style="left:770px;top:275.0px;font-size:14px;line-height:20px;color:#0091ff;font-weight:normal;letter-spacing:0.3px;">test-genie</div>
<div class="t" style="left:933px;top:275.0px;font-size:14px;line-height:20px;color:#595959;font-weight:normal;letter-spacing:0px;">UNKNOWN</div>
<div class="t" style="left:1115px;top:275.0px;font-size:14px;line-height:20px;color:#595959;font-weight:normal;letter-spacing:0.56px;">4.21.0.0</div>
<div class="t" style="left:1281px;top:275.0px;font-size:14px;line-height:20px;color:#595959;font-weight:normal;letter-spacing:0.56px;">4.20.0</div>
<div class="t" style="left:1413px;top:275.0px;font-size:14px;line-height:20px;color:#0091ff;font-weight:normal;letter-spacing:0.3px;">ablecube3</div>
<div class="t" style="left:1530px;top:275.0px;font-size:14px;line-height:20px;color:#0091ff;font-weight:normal;letter-spacing:0.3px;">admin</div>
<div class="t" style="left:1607px;top:275.0px;font-size:14px;line-height:20px;color:#0091ff;font-weight:normal;letter-spacing:0.3px;">Zone</div>
<div style="position:absolute;left:1697px;top:278px;width:12px;height:12px;box-sizing:border-box;background:#d9d9d9;border-radius:50%"></div>
<div class="t" style="left:1721px;top:275.8px;font-size:14px;line-height:20px;color:#595959;font-weight:normal;letter-spacing:0.3px;">No</div>
<div style="position:absolute;left:274px;top:326px;width:16px;height:16px;box-sizing:border-box;border:1px solid #d9d9d9;border-radius:3px;background:#fff"></div>
<div class="t" style="left:306px;top:324.0px;font-size:14px;line-height:20px;color:#0091ff;font-weight:normal;letter-spacing:0.8px;">r-713-VM</div>
<div style="position:absolute;left:411px;top:323px;width:24px;height:24px;box-sizing:border-box;border-radius:50%;box-shadow:0 2px 0 rgba(0,0,0,.015)"></div>
<div style="position:absolute;left:422px;top:329px;width:2px;height:2px;box-sizing:border-box;background:#595959"></div>
<div style="position:absolute;left:422px;top:333px;width:2px;height:2px;box-sizing:border-box;background:#595959"></div>
<div style="position:absolute;left:422px;top:337px;width:2px;height:2px;box-sizing:border-box;background:#595959"></div>
<div style="position:absolute;left:451px;top:327px;width:12px;height:12px;box-sizing:border-box;background:#ff1f33;border-radius:50%"></div>
<div class="t" style="left:471px;top:324.0px;font-size:14px;line-height:20px;color:#595959;font-weight:normal;letter-spacing:0.3px;"><k style="margin-right:-6.30px">정지된</k> <k style="margin-right:-4.20px">상태</k></div>
<div class="t" style="left:590px;top:324.0px;font-size:14px;line-height:20px;color:#0091ff;font-weight:normal;letter-spacing:0.72px;">10.10.22.161</div>
<svg style="position:absolute;left:750px;top:325px;" width="18" height="18" viewBox="750 325 18 18" fill="none" stroke="#0091ff" stroke-width="1.3" stroke-linecap="round" stroke-linejoin="round">
<rect x="756.8" y="327.6" width="4.4" height="4.2"/>
<rect x="752.8" y="336.4" width="4.4" height="4.2"/>
<rect x="760.8" y="336.4" width="4.4" height="4.2"/>
<path d="M759 331.8 V334 M755 336.4 V334 H763 V336.4"/>
</svg>
<div class="t" style="left:770px;top:324.0px;font-size:14px;line-height:20px;color:#0091ff;font-weight:normal;letter-spacing:0.3px;">smlee-network</div>
<div class="t" style="left:933px;top:324.0px;font-size:14px;line-height:20px;color:#595959;font-weight:normal;letter-spacing:0px;">UNKNOWN</div>
<div class="t" style="left:1115px;top:324.0px;font-size:14px;line-height:20px;color:#595959;font-weight:normal;letter-spacing:0.56px;">4.21.0.0</div>
<div class="t" style="left:1281px;top:324.0px;font-size:14px;line-height:20px;color:#595959;font-weight:normal;letter-spacing:0.56px;">4.20.0</div>
<div class="t" style="left:1530px;top:324.0px;font-size:14px;line-height:20px;color:#0091ff;font-weight:normal;letter-spacing:0.3px;">admin</div>
<div class="t" style="left:1607px;top:324.0px;font-size:14px;line-height:20px;color:#0091ff;font-weight:normal;letter-spacing:0.3px;">Zone</div>
<div style="position:absolute;left:1697px;top:327px;width:12px;height:12px;box-sizing:border-box;background:#d9d9d9;border-radius:50%"></div>
<div class="t" style="left:1721px;top:324.8px;font-size:14px;line-height:20px;color:#595959;font-weight:normal;letter-spacing:0.3px;">No</div>
<div style="position:absolute;left:274px;top:375px;width:16px;height:16px;box-sizing:border-box;border:1px solid #d9d9d9;border-radius:3px;background:#fff"></div>
<div class="t" style="left:306px;top:373.0px;font-size:14px;line-height:20px;color:#0091ff;font-weight:normal;letter-spacing:0.8px;">r-720-VM</div>
<div style="position:absolute;left:411px;top:372px;width:24px;height:24px;box-sizing:border-box;border-radius:50%;box-shadow:0 2px 0 rgba(0,0,0,.015)"></div>
<div style="position:absolute;left:422px;top:378px;width:2px;height:2px;box-sizing:border-box;background:#595959"></div>
<div style="position:absolute;left:422px;top:382px;width:2px;height:2px;box-sizing:border-box;background:#595959"></div>
<div style="position:absolute;left:422px;top:386px;width:2px;height:2px;box-sizing:border-box;background:#595959"></div>
<div style="position:absolute;left:451px;top:376px;width:12px;height:12px;box-sizing:border-box;background:#33c23a;border-radius:50%"></div>
<div class="t" style="left:471px;top:373.0px;font-size:14px;line-height:20px;color:#595959;font-weight:normal;letter-spacing:0.3px;"><k style="margin-right:-6.30px">실행중</k></div>
<div class="t" style="left:590px;top:373.0px;font-size:14px;line-height:20px;color:#0091ff;font-weight:normal;letter-spacing:0.72px;">10.10.22.160</div>
<svg style="position:absolute;left:750px;top:374px;" width="18" height="18" viewBox="750 374 18 18" fill="none" stroke="#0091ff" stroke-width="1.3" stroke-linecap="round" stroke-linejoin="round">
<rect x="756.8" y="376.6" width="4.4" height="4.2"/>
<rect x="752.8" y="385.4" width="4.4" height="4.2"/>
<rect x="760.8" y="385.4" width="4.4" height="4.2"/>
<path d="M759 380.8 V383 M755 385.4 V383 H763 V385.4"/>
</svg>
<div class="t" style="left:770px;top:373.0px;font-size:14px;line-height:20px;color:#0091ff;font-weight:normal;letter-spacing:0.3px;">jsjs-network</div>
<div class="t" style="left:933px;top:373.0px;font-size:14px;line-height:20px;color:#595959;font-weight:normal;letter-spacing:0px;">UNKNOWN</div>
<div class="t" style="left:1115px;top:373.0px;font-size:14px;line-height:20px;color:#595959;font-weight:normal;letter-spacing:0.56px;">4.21.0.0</div>
<div class="t" style="left:1281px;top:373.0px;font-size:14px;line-height:20px;color:#595959;font-weight:normal;letter-spacing:0.56px;">4.20.0</div>
<div class="t" style="left:1413px;top:373.0px;font-size:14px;line-height:20px;color:#0091ff;font-weight:normal;letter-spacing:0.3px;">ablecube3</div>
<div class="t" style="left:1530px;top:373.0px;font-size:14px;line-height:20px;color:#0091ff;font-weight:normal;letter-spacing:0.3px;">admin</div>
<div class="t" style="left:1607px;top:373.0px;font-size:14px;line-height:20px;color:#0091ff;font-weight:normal;letter-spacing:0.3px;">Zone</div>
<div style="position:absolute;left:1697px;top:376px;width:12px;height:12px;box-sizing:border-box;background:#d9d9d9;border-radius:50%"></div>
<div class="t" style="left:1721px;top:373.8px;font-size:14px;line-height:20px;color:#595959;font-weight:normal;letter-spacing:0.3px;">No</div>
<div class="t" style="left:266px;top:444.0px;font-size:14px;line-height:20px;color:#595959;font-weight:normal;letter-spacing:0.3px;"><k style="margin-right:-4.20px">전체</k> 4 <k style="margin-right:-2.10px">개</k> <k style="margin-right:-4.20px">항목</k> <k style="margin-right:-2.10px">중</k> 1-4 <k style="margin-right:-4.20px">표시</k></div>
<svg style="position:absolute;left:430px;top:446px;" width="16" height="18" viewBox="430 446 16 18" fill="none" stroke="#b0b0b0" stroke-width="1.1" stroke-linecap="round" stroke-linejoin="round"><path d="M440.6 450.6 L435.6 455.2 L440.6 459.8"/></svg>
<div style="position:absolute;left:450px;top:442px;width:24px;height:24px;box-sizing:border-box;border:1px solid #0091ff;border-radius:4px;background:#fff"></div>
<div class="t" style="left:450px;top:444.0px;font-size:14px;line-height:20px;color:#0091ff;font-weight:bold;letter-spacing:0.3px;width:24px;text-align:center;">1</div>
<svg style="position:absolute;left:478px;top:446px;" width="16" height="18" viewBox="478 446 16 18" fill="none" stroke="#b0b0b0" stroke-width="1.1" stroke-linecap="round" stroke-linejoin="round"><path d="M483.6 450.6 L488.6 455.2 L483.6 459.8"/></svg>
<div style="position:absolute;left:500px;top:442px;width:77px;height:24px;box-sizing:border-box;border:1px solid #d9d9d9;border-radius:4px;background:#fff"></div>
<div class="t" style="left:509px;top:444.0px;font-size:14px;line-height:20px;color:#595959;font-weight:normal;letter-spacing:0.3px;">20 / <k style="margin-right:-2.10px">쪽</k></div>
<svg style="position:absolute;left:552px;top:446px;" width="18" height="14" viewBox="552 446 18 14" fill="none" stroke="#bfbfbf" stroke-width="1.1" stroke-linecap="round" stroke-linejoin="round"><path d="M556.8 450.6 L561.2 456 L565.6 450.6"/></svg>
<div style="position:absolute;left:1863px;top:881px;width:39px;height:40px;box-sizing:border-box;background:#a8a8a8;border-radius:4px 0 0 4px"></div>
<svg style="position:absolute;left:1873px;top:890px;" width="20" height="20" viewBox="1873 890 20 20" fill="none" stroke="#fff" stroke-width="1.0" stroke-linecap="round" stroke-linejoin="round">
<rect x="1876.2" y="896.2" width="13.6" height="9.8"/>
<path d="M1878.6 895 V897.4 M1881.6 895 V897.4 M1884.6 895 V897.4 M1887.4 895 V897.4"/>
<path d="M1878.2 900.6 H1880.6 M1878.2 903 H1880.6 M1882.6 901.2 L1884.2 902.8 L1887.2 899.8"/>
</svg>
<div style="position:absolute;left:1863px;top:921px;width:39px;height:40px;box-sizing:border-box;background:#0091ff;border-radius:4px 0 0 4px"></div>
<svg style="position:absolute;left:1872px;top:929px;" width="24" height="24" viewBox="1872 929 24 24" fill="none" stroke="#fff" stroke-width="1.4" stroke-linecap="round" stroke-linejoin="round">
<path d="M1881.95 934.83 L1882.45 933.04 L1885.35 933.04 L1885.85 934.83 Q1886.50 936.00 1887.84 935.97 L1887.84 935.97 L1889.64 935.51 L1891.09 938.03 L1889.79 939.36 Q1889.10 940.50 1889.79 941.64 L1889.79 941.64 L1891.09 942.97 L1889.64 945.49 L1887.84 945.03 Q1886.50 945.00 1885.85 946.17 L1885.85 946.17 L1885.35 947.96 L1882.45 947.96 L1881.95 946.17 Q1881.30 945.00 1879.96 945.03 L1879.96 945.03 L1878.16 945.49 L1876.71 942.97 L1878.01 941.64 Q1878.70 940.50 1878.01 939.36 L1878.01 939.36 L1876.71 938.03 L1878.16 935.51 L1879.96 935.97 Q1881.30 936.00 1881.95 934.83 Z"/>
<circle cx="1883.9" cy="940.5" r="2.6"/>
</svg>
</body></html>
